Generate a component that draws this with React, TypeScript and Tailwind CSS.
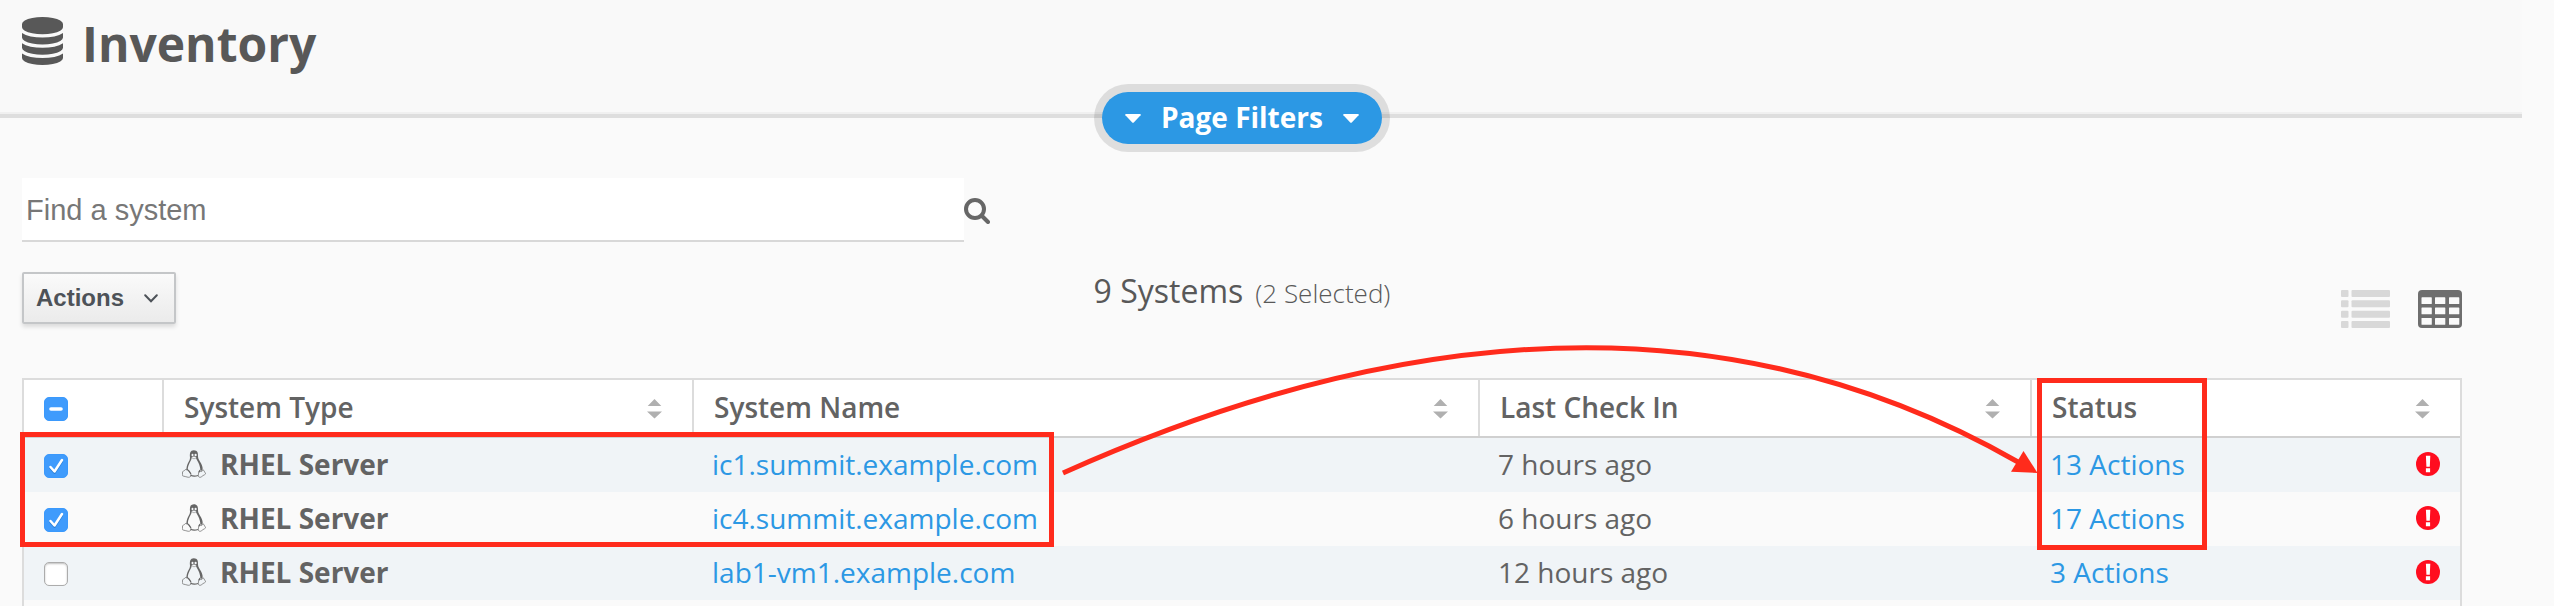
import { useState } from "react";

type System = { name: string; checkIn: string; actions: string; selected: boolean };

const SYSTEMS: System[] = [
  { name: "ic1.summit.example.com", checkIn: "7 hours ago", actions: "13 Actions", selected: true },
  { name: "ic4.summit.example.com", checkIn: "6 hours ago", actions: "17 Actions", selected: true },
  { name: "lab1-vm1.example.com", checkIn: "12 hours ago", actions: "3 Actions", selected: false },
];

function DatabaseIcon() {
  return (
    <svg viewBox="0 0 1536 1792" className="h-12 w-[41px] fill-current" aria-hidden="true">
      <path d="M768 768q237 0 443-43t325-127v170q0 69-103 128t-280 93.5-385 34.5-385-34.5-280-93.5-103-128v-170q119 84 325 127t443 43zm0 768q237 0 443-43t325-127v170q0 69-103 128t-280 93.5-385 34.5-385-34.5-280-93.5-103-128v-170q119 84 325 127t443 43zm0-384q237 0 443-43t325-127v170q0 69-103 128t-280 93.5-385 34.5-385-34.5-280-93.5-103-128v-170q119 84 325 127t443 43zm0-1152q208 0 385 34.5t280 93.5 103 128v128q0 69-103 128t-280 93.5-385 34.5-385-34.5-280-93.5-103-128v-128q0-69 103-128t280-93.5 385-34.5z" />
    </svg>
  );
}

function Caret() {
  return (
    <svg viewBox="0 0 16 9" className="h-[9px] w-4 fill-current" aria-hidden="true">
      <path d="M1 0h14q1.2.2.6 1.2L8.8 8.4q-.8.8-1.6 0L.4 1.2Q-.2.2 1 0z" />
    </svg>
  );
}

function SearchIcon() {
  return (
    <svg viewBox="0 0 26 26" className="h-[26px] w-[26px]" fill="none" stroke="#666" aria-hidden="true">
      <circle cx="11" cy="11" r="9" strokeWidth="4" />
      <path d="M18 18l6 6" strokeWidth="4" strokeLinecap="round" />
    </svg>
  );
}

function ListIcon() {
  return (
    <svg viewBox="0 0 49 38" className="h-[38px] w-[49px]" fill="#d8d8d8" aria-hidden="true">
      {[0, 10.3, 20.7, 31].map((y) => (
        <g key={y}>
          <rect x="0" y={y} width="7.5" height="7" rx="1" />
          <rect x="10.5" y={y} width="38.5" height="7" rx="1" />
        </g>
      ))}
    </svg>
  );
}

function GridIcon() {
  return (
    <svg viewBox="0 0 44 38" className="h-[38px] w-11" aria-hidden="true">
      <rect width="44" height="38" rx="4" fill="#6e6e6e" />
      {[7.3, 17.5, 28].map((y) =>
        [3.5, 17, 31].map((x) => <rect key={`${x}-${y}`} x={x} y={y} width="10.3" height="6.8" rx="0.6" fill="#fafafa" />)
      )}
    </svg>
  );
}

function PenguinIcon() {
  return (
    <svg viewBox="0 0 24 28" className="h-7 w-6" fill="none" stroke="#666" strokeWidth="0.9" strokeLinejoin="round" aria-hidden="true">
      <path d="M8 7.5C7.6 3 8.2.4 11.8.3 15.600.3 16.200 3.200 16 6.500c0 2.300 1.600 4.200 3 6.700 1.400 2.600 2.200 5.400 1.300 7.800l-1.800-.8c-.6-4.200-1.600-7.200-3.700-10.400-.5-.9-.9-1.500-1-2.300-1.200 1-2.800 1.100-4 .1-.3 2.300-1.700 4-2.700 6.400-.9 2-1.400 4.100-1.300 6l-1.300.4c-.2-2.600.3-4.900 1.400-7.200C7 11.200 8.100 9.600 8 7.500z" fill="#666" stroke="none" />
      <ellipse cx="10.500" cy="5" rx="1" ry="1.200" fill="#f5f7f9" stroke="none" />
      <ellipse cx="13.600" cy="5" rx="1.100" ry="1.300" fill="#f5f7f9" stroke="none" />
      <path d="M9.500 7.200c1-1.200 3.600-1.200 5 0-.8 1.700-3.600 2.200-5 0z" fill="#f5f7f9" strokeWidth="0.500" />
      <path d="M5.300 19.500c1.200.7 3 3.200 3.700 4.600M18.500 19.800c-.8.200-1.100 1.300-1.200 2.600M8.500 25.300c2.300 1 5.300 1 7.500.1" strokeWidth="1.100" />
      <path d="M3.200 19.700c1-.5 2.200-.6 2.900.3 1 1.300 2 2.900 2.800 4.300.6 1.700-.5 3-2.600 3-1.700-.2-3.300-1-5.200-1.300-.9-.3-.9-.9-.6-1.800.1-.8-.2-1.700.1-2.500.5-.6 1.900-.8 2.600-2z" strokeWidth="0.700" />
      <path d="M17.300 20.600c-.9.700-.6 1.900-.8 3.400-.2 1.300-.5 2.600.8 3.200 1.600.5 2.500-.8 3.700-1.600 1-.7 2.200-1 2.600-1.700.2-.8-1.100-1.500-1.400-2.900-.3-.8-.7-1-1.200-.7-1 1.500-2.700 1.600-3.700.3z" strokeWidth="0.700" />
    </svg>
  );
}

function AlertIcon() {
  return (
    <svg viewBox="0 0 24 24" className="h-6 w-6" role="img" aria-label="Critical">
      <circle cx="12" cy="12" r="12" fill="#ff0d1f" />
      <path d="M9.900 3.800h4.400l-.5 11h-3.400zM9.900 16.300h4.200v4h-4.200z" fill="#fff" />
    </svg>
  );
}

function SortIcon() {
  return (
    <svg viewBox="0 0 15 20" className="h-5 w-[15px]" fill="#b0b0b0" aria-hidden="true">
      <path d="M7.500 0L14.300 7H.7zM0 12.500h15L7.500 19.500z" />
    </svg>
  );
}

function Checkbox({ label, checked, mixed, onChange }: { label: string; checked: boolean; mixed?: boolean; onChange: () => void }) {
  return (
    <span className="relative block h-6 w-6">
      <input
        type="checkbox"
        aria-label={label}
        checked={checked}
        onChange={onChange}
        className="block h-6 w-6 appearance-none rounded-[5px] border border-[#acacac] bg-white shadow-[inset_0_1px_2px_rgba(0,0,0,0.25)] checked:border-[#3b99fc] checked:bg-[#3f9bfc] checked:shadow-none"
      />
      {checked && (
        <svg viewBox="0 0 24 24" className="pointer-events-none absolute inset-0 h-6 w-6" fill="none" stroke="#fff" strokeLinecap="round" strokeLinejoin="round" aria-hidden="true">
          {mixed ? (
            <path d="M7 12h10" strokeWidth="3.600" />
          ) : (
            <>
              <path d="M6.500 14.300l4 4.500 7.500-11.500" stroke="#2b7fd6" strokeWidth="2.400" />
              <path d="M6.500 13l4 4.500 7.500-11.500" strokeWidth="2.500" />
            </>
          )}
        </svg>
      )}
    </span>
  );
}

function HeaderCell({ title }: { title: string }) {
  return (
    <th scope="col" className="border-l-2 border-[#dcdcdc] p-0 text-left font-semibold">
      <div className="flex items-center justify-between pr-[30px] pl-5">
        <span className="pb-0.5">{title}</span>
        <button type="button" aria-label={`Sort by ${title}`} className="pt-0.5">
          <SortIcon />
        </button>
      </div>
    </th>
  );
}

function Callouts() {
  return (
    <svg viewBox="0 0 2220 560" className="pointer-events-none absolute top-0 left-0 h-[560px] w-[2220px]" fill="none" stroke="#ff2b1c" strokeWidth="5" aria-hidden="true">
      <rect x="22.500" y="434.500" width="1029" height="110" />
      <rect x="2039.500" y="380.500" width="165" height="167" />
      <path d="M1063 473Q1610 228 2018 462" />
      <path d="M2023.500 451L2037.500 473L2011 471.800z" fill="#ff2b1c" stroke="none" />
    </svg>
  );
}

export default function App() {
  const [rows, setRows] = useState(SYSTEMS);
  const selected = rows.filter((r) => r.selected).length;
  const toggle = (name: string) => setRows(rows.map((r) => (r.name === name ? { ...r, selected: !r.selected } : r)));
  const toggleAll = () => setRows(rows.map((r) => ({ ...r, selected: selected === 0 })));

  return (
    <div className="relative h-screen overflow-hidden bg-[#fafafa] font-['Open_Sans',sans-serif] text-[28px] leading-[38px] text-[#636363]">
      <header className="mr-8 h-[118px] border-b-4 border-[#dedede] bg-[#f9f9f9] shadow-[inset_0_-2px_0_#f0f0f0]">
        <div className="flex items-start gap-[19px] pt-[17px] pl-[22px] text-[#585858]">
          <DatabaseIcon />
          <h1 className="-mt-1 text-[48px] leading-[62px] font-bold">Inventory</h1>
        </div>
      </header>

      <div className="-mt-[34px] flex justify-center pr-[70px]">
        <button type="button" className="flex h-[68px] items-center gap-5 rounded-full border-8 border-black/11 bg-[#2c98e4] bg-clip-padding px-[23px] font-bold text-white">
          <Caret />
          <span className="pb-0.5">Page Filters</span>
          <Caret />
        </button>
      </div>

      <main className="pt-[26px] pr-[92px] pl-[22px]">
        <form role="search" className="flex items-center" onSubmit={(e) => e.preventDefault()}>
          <input
            type="text"
            aria-label="Find a system"
            placeholder="Find a system"
            className="h-16 w-[942px] border-b-2 border-[#d8d8d8] bg-white px-1 pt-0.5 font-['Liberation_Sans',sans-serif] text-[29px] outline-none placeholder:text-[#777]"
          />
          <button type="submit" aria-label="Search" className="pt-0.5">
            <SearchIcon />
          </button>
        </form>

        <div className="grid h-[106px] grid-cols-[1fr_auto_1fr] items-start pt-[30px]">
          <button
            type="button"
            className="flex h-[52px] w-[154px] items-center gap-5 rounded-xs border-2 border-[#c4c6c8] bg-linear-to-b from-[#fafafa] to-[#ebebeb] pl-3 font-['Liberation_Sans',sans-serif] text-2xl font-bold text-[#4d5258] shadow-[0_3px_4px_rgba(0,0,0,0.12)]"
          >
            Actions
            <svg viewBox="0 0 14 9" className="h-[9px] w-[14px]" fill="none" stroke="currentColor" strokeWidth="2" strokeLinecap="round" aria-hidden="true">
              <path d="M1.200 1.200L7 7.200l5.800-6" />
            </svg>
          </button>
          <h2 className="flex items-baseline gap-3 text-[32px] leading-[38px] text-[#585858]">
            9 Systems <small className="text-[26px] font-light">({selected} Selected)</small>
          </h2>
          <div className="flex justify-end gap-7 pt-[18px]">
            <button type="button" aria-label="List view">
              <ListIcon />
            </button>
            <button type="button" aria-label="Table view">
              <GridIcon />
            </button>
          </div>
        </div>

        <div className="mt-[30px] border-2 border-[#dcdcdc]">
          <table className="w-full table-fixed border-separate border-spacing-0">
            <colgroup>
              <col className="w-[138px]" />
              <col className="w-[530px]" />
              <col />
              <col className="w-[552px]" />
              <col className="w-[430px]" />
            </colgroup>
            <thead>
              <tr className="h-14 bg-white">
                <th scope="col" className="p-0 pt-0.5 pl-5">
                  <Checkbox label="Select all systems" checked={selected > 0} mixed={selected < rows.length} onChange={toggleAll} />
                </th>
                <HeaderCell title="System Type" />
                <HeaderCell title="System Name" />
                <HeaderCell title="Last Check In" />
                <HeaderCell title="Status" />
              </tr>
            </thead>
            <tbody>
              <tr aria-hidden="true">
                <td colSpan={5} className="h-0.5 bg-[#d0d0d0] p-0" />
              </tr>
              {rows.map((row, i) => (
                <tr key={row.name} className={i % 2 === 0 ? "h-[54px] bg-[#f0f4f7]" : "h-[54px] bg-[#fafafa]"}>
                  <td className="p-0 pt-0.5 pl-5">
                    <Checkbox label={`Select ${row.name}`} checked={row.selected} onChange={() => toggle(row.name)} />
                  </td>
                  <td className="p-0 pb-[3px] pl-5">
                    <div className="flex items-center gap-[14px] font-bold">
                      <PenguinIcon />
                      RHEL Server
                    </div>
                  </td>
                  <td className="p-0 pb-[3px] pl-5">
                    <a href="#system" className="text-[#2c98e4]">{row.name}</a>
                  </td>
                  <td className="p-0 pb-[3px] pl-5">{row.checkIn}</td>
                  <td className="p-0 pb-[3px]">
                    <div className="flex items-center justify-between pr-5 pl-5">
                      <a href="#actions" className="text-[#2c98e4]">{row.actions}</a>
                      <AlertIcon />
                    </div>
                  </td>
                </tr>
              ))}
              <tr className="h-[54px]" aria-hidden="true">
                <td colSpan={5} />
              </tr>
            </tbody>
          </table>
        </div>
      </main>

      <Callouts />
    </div>
  );
}
